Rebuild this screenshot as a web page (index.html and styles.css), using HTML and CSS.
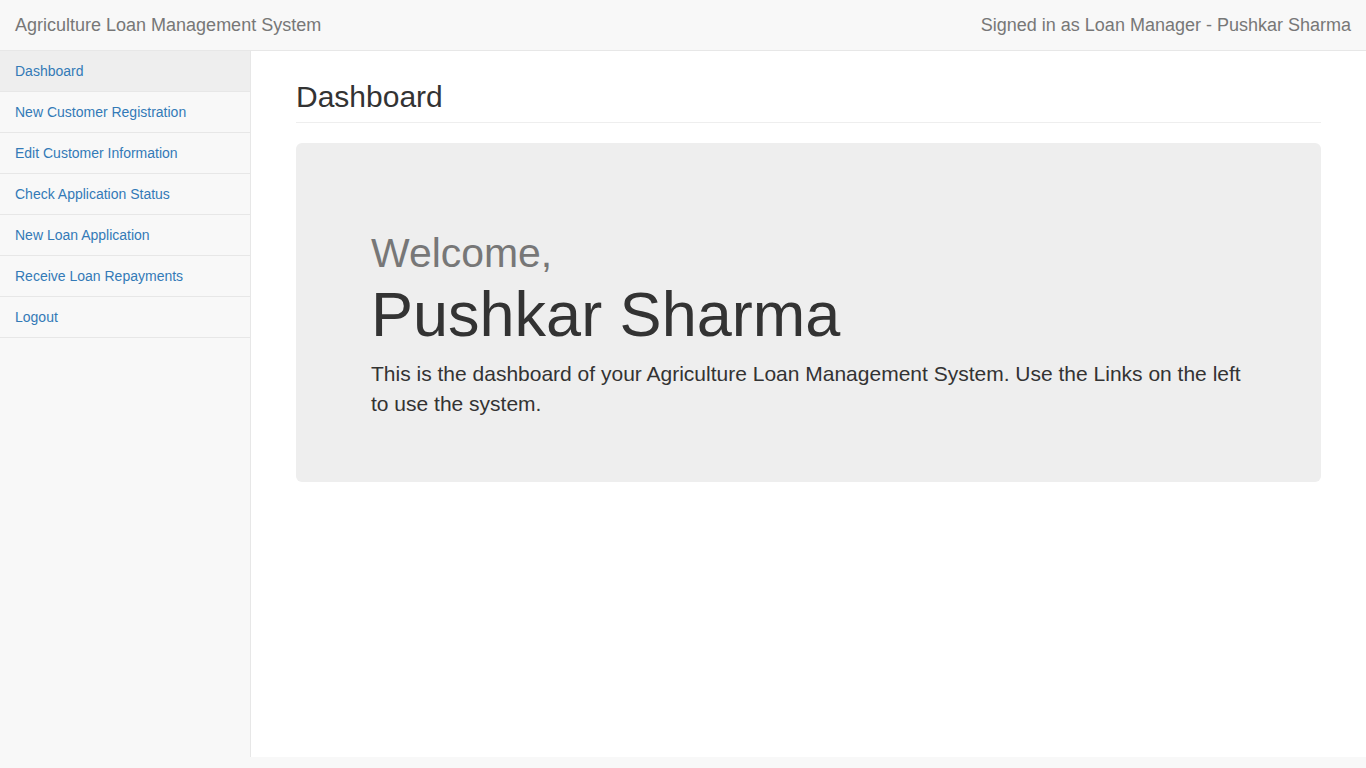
FILE: index.html
```html
<!DOCTYPE html>
<html lang="en">
<head>
<meta charset="utf-8">
<title>Agriculture Loan Management System</title>
<link rel="stylesheet" href="styles.css">
</head>
<body>
<header class="navbar">
  <a class="brand" href="#">Agriculture Loan Management System</a>
  <span class="navbar-text">Signed in as Loan Manager - Pushkar Sharma</span>
</header>
<div class="layout">
  <nav class="sidebar">
    <ul class="side-menu">
      <li class="active"><a href="#">Dashboard</a></li>
      <li><a href="#">New Customer Registration</a></li>
      <li><a href="#">Edit Customer Information</a></li>
      <li><a href="#">Check Application Status</a></li>
      <li><a href="#">New Loan Application</a></li>
      <li><a href="#">Receive Loan Repayments</a></li>
      <li><a href="#">Logout</a></li>
    </ul>
  </nav>
  <main class="page-wrapper">
    <h2 class="page-header">Dashboard</h2>
    <section class="jumbotron">
      <h1><small>Welcome,</small><br>Pushkar Sharma</h1>
      <p>This is the dashboard of your Agriculture Loan Management System. Use the Links on the left to use the system.</p>
    </section>
  </main>
</div>
</body>
</html>
```

FILE: styles.css
```css
* { box-sizing: border-box; }

html, body {
  margin: 0;
  padding: 0;
}

body {
  background: #f8f8f8;
  font-family: "Liberation Sans", Arial, Helvetica, sans-serif;
  font-size: 14px;
  line-height: 1.42857;
  color: #333;
}

a { text-decoration: none; }

.navbar {
  display: flex;
  justify-content: space-between;
  align-items: center;
  height: 51px;
  background: #f8f8f8;
  border-bottom: 1px solid #e7e7e7;
}

.brand {
  padding: 15px;
  font-size: 18px;
  line-height: 20px;
  color: #777;
}

.navbar-text {
  padding: 15px;
  font-size: 18px;
  line-height: 20px;
  color: #777;
}

.layout {
  display: flex;
  align-items: flex-start;
}

.sidebar {
  width: 250px;
  flex: none;
}

.side-menu {
  list-style: none;
  margin: 0;
  padding: 0;
}

.side-menu li {
  border-bottom: 1px solid #e7e7e7;
}

.side-menu li a {
  display: block;
  padding: 10px 15px;
  line-height: 20px;
  color: #337ab7;
  font-size: 14px;
}

.side-menu li.active a {
  background: #eee;
}

.page-wrapper {
  flex: 1;
  min-height: calc(100vh - 62px);
  background: #fff;
  border-left: 1px solid #e7e7e7;
  padding: 1px 45px 0;
}

.page-header {
  margin: 28px 0 20px;
  padding-bottom: 9px;
  border-bottom: 1px solid #eee;
  font-size: 30px;
  font-weight: 500;
  line-height: 1.1;
  color: #333;
}

.jumbotron {
  background: #eee;
  border-radius: 6px;
  padding: 48px 75px 48px;
}

.jumbotron h1 {
  margin: 20px 0 9px;
  font-size: 63px;
  font-weight: 500;
  line-height: 1.1;
  color: #333;
}

.jumbotron h1 small {
  font-size: 65%;
  font-weight: normal;
  line-height: 1;
  color: #777;
}

.jumbotron p {
  margin: 0 0 15px;
  font-size: 21px;
  font-weight: 200;
  line-height: 1.42857;
  color: #333;
}
```
